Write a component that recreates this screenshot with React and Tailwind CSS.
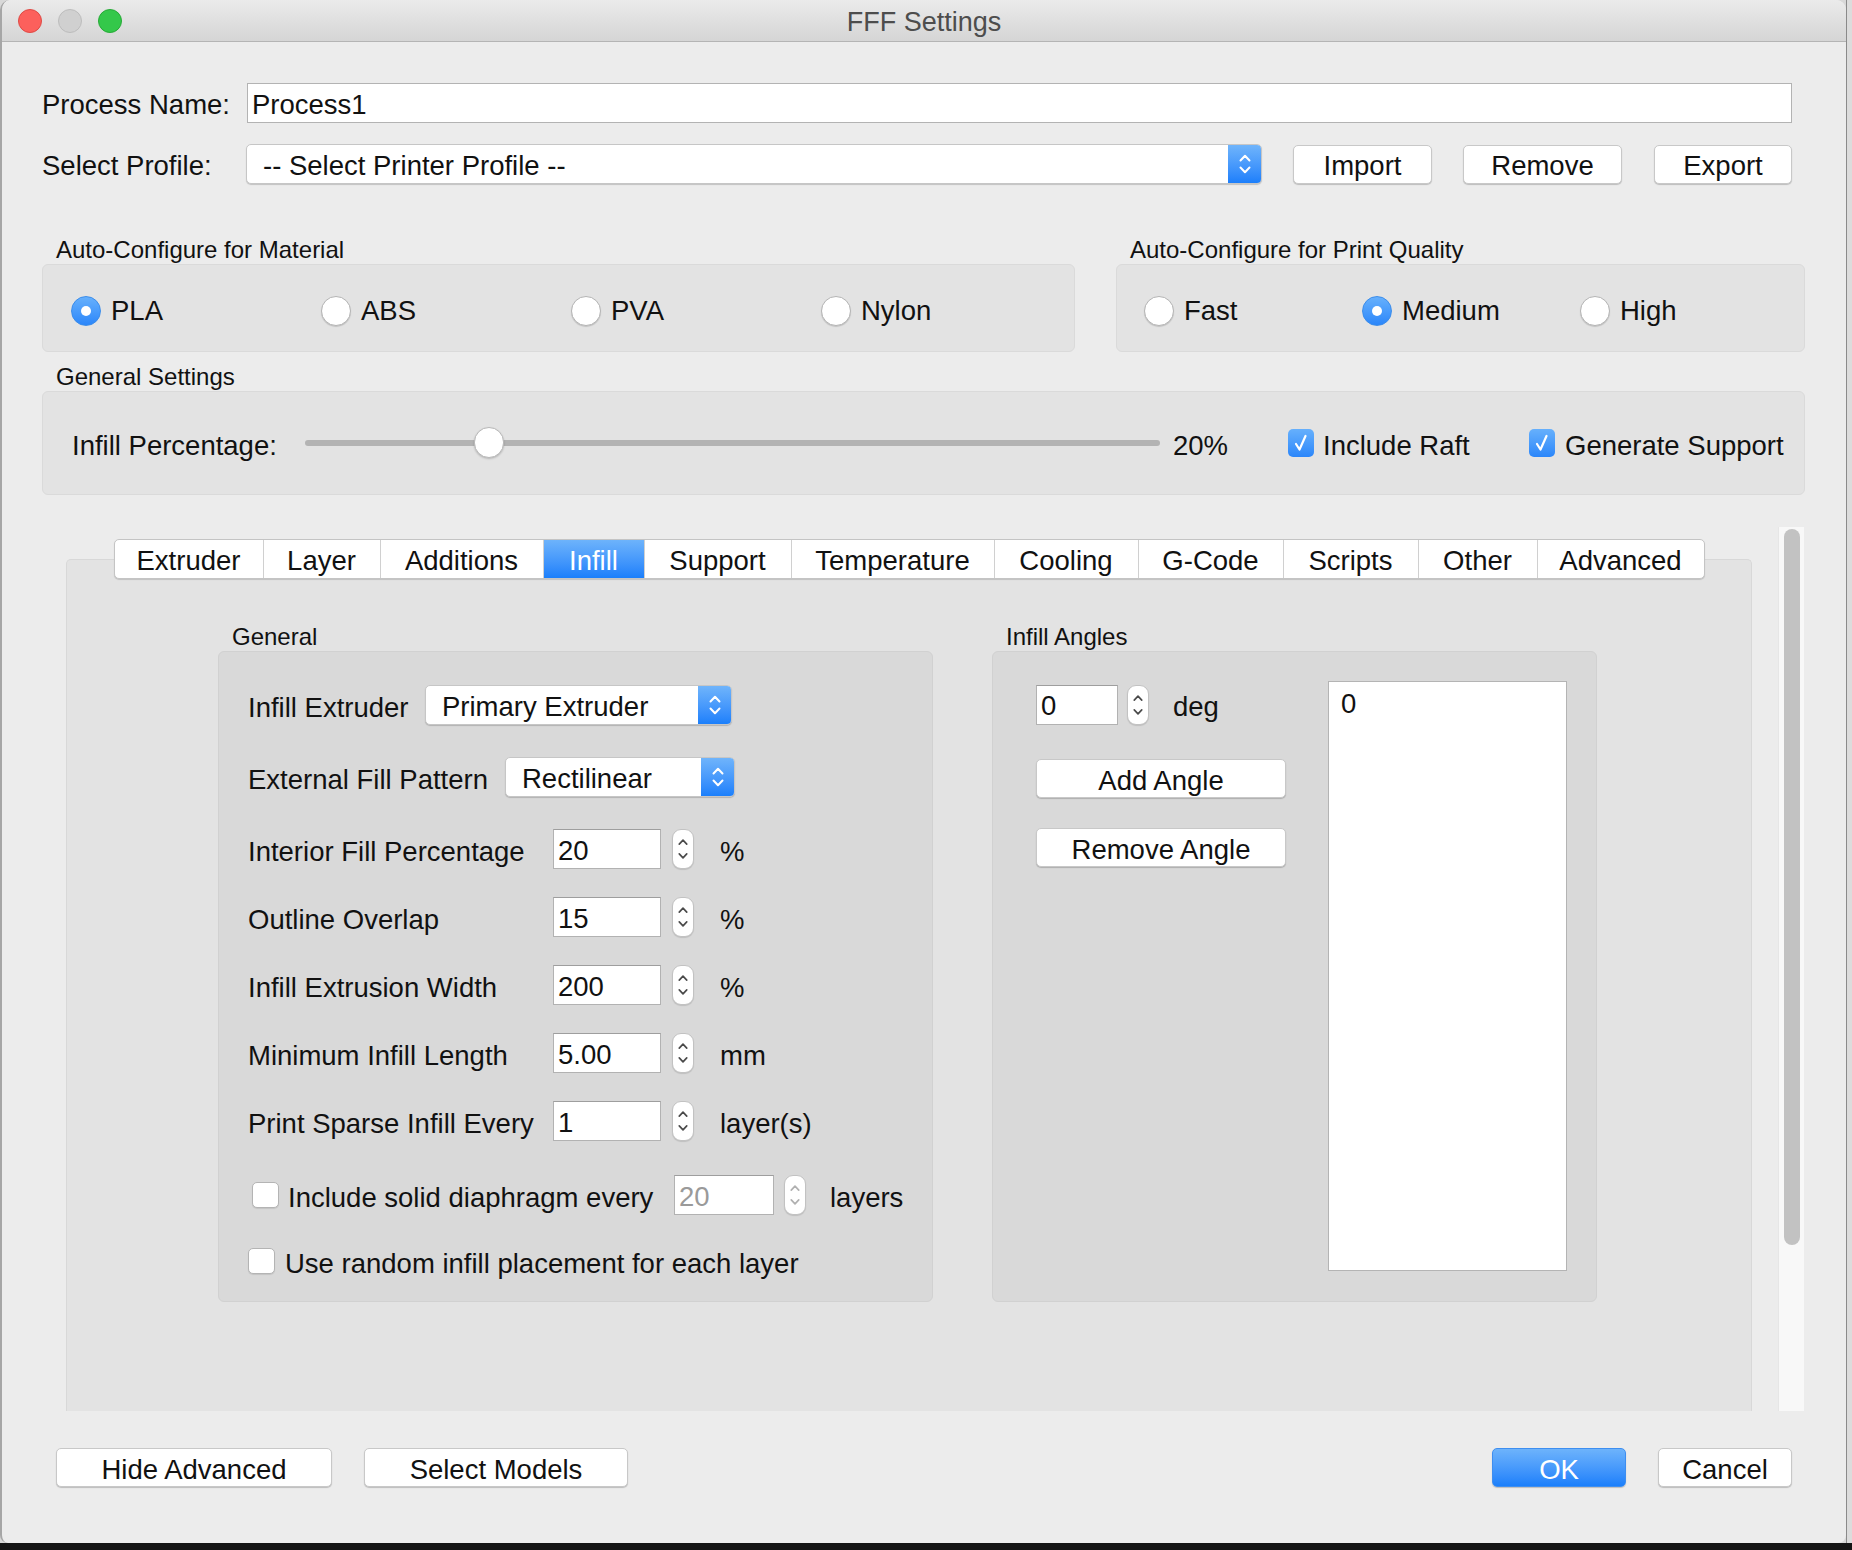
import React from "react";

// small up/down arrows used by the pop-up buttons and the steppers
const UpDown = ({ color = "#fff", gap = "gap-[5px]", w = 12 }) => (
  <div className={`flex flex-col items-center ${gap}`}>
    <svg width={w} height="8" viewBox="0 0 12 8" fill="none">
      <path d="M1.5 6.5 L6 1.8 L10.5 6.5" stroke={color} strokeWidth="2" strokeLinecap="round" strokeLinejoin="round" />
    </svg>
    <svg width={w} height="8" viewBox="0 0 12 8" fill="none">
      <path d="M1.5 1.5 L6 6.2 L10.5 1.5" stroke={color} strokeWidth="2" strokeLinecap="round" strokeLinejoin="round" />
    </svg>
  </div>
);

const Select = ({ w, text, pl = "pl-[16px]" }) => (
  <div className={`${w} h-[40px] flex bg-white rounded-[5px] border border-[#c6c6c6] shadow-[0_1px_1px_rgba(0,0,0,0.18)] overflow-hidden`}>
    <div className={`flex-1 flex items-center ${pl} pt-[4px] whitespace-nowrap`}>{text}</div>
    <div className="w-[33px] flex items-center justify-center bg-linear-to-b from-[#6fb4fb] to-[#1b7ffb]">
      <UpDown color="#fff" gap="gap-[4px]" w={14} />
    </div>
  </div>
);

const Stepper = ({ disabled }) => (
  <div className="w-[22px] h-[40px] rounded-[9px] bg-white border border-[#c2c2c2] shadow-[0_1px_1px_rgba(0,0,0,0.12)] flex items-center justify-center">
    <UpDown color={disabled ? "#b0b0b0" : "#4a4a4a"} gap="gap-[6px]" w={10} />
  </div>
);

const Input = ({ w, value, disabled }) => (
  <div className={`${w} h-[40px] bg-white border border-[#b2b2b2] border-t-[#9e9e9e] flex items-center pl-[4px] pt-[3px] ${disabled ? "text-[#9a9a9a]" : ""}`}>
    {value}
  </div>
);

const Button = ({ w, children, primary }) => (
  <div
    className={`${w} h-[39px] flex items-center justify-center pt-[4px] rounded-[5px] shadow-[0_1px_1px_rgba(0,0,0,0.2)] ${
      primary
        ? "bg-linear-to-b from-[#6db3fb] to-[#1a7ffb] border border-[#3e8ef0] text-white"
        : "bg-white border border-[#c8c8c8]"
    }`}
  >
    {children}
  </div>
);

const Radio = ({ on }) =>
  on ? (
    <div className="w-[30px] h-[30px] rounded-full bg-linear-to-b from-[#66b0fc] to-[#2a86fa] border border-[#3b8deb] flex items-center justify-center">
      <div className="w-[10px] h-[10px] rounded-full bg-white" />
    </div>
  ) : (
    <div className="w-[30px] h-[30px] rounded-full bg-white border border-[#b4b4b4] shadow-[0_1px_1px_rgba(0,0,0,0.15)]" />
  );

const Check = ({ on }) =>
  on ? (
    <div className="w-[26px] h-[28px] rounded-[5px] bg-linear-to-b from-[#66b0fc] to-[#2a86fa] flex items-center justify-center">
      <svg width="16" height="20" viewBox="0 0 16 20" fill="none">
        <path d="M3 11 L6.5 16.5 L12.5 3" stroke="#fff" strokeWidth="2.2" strokeLinecap="round" strokeLinejoin="round" />
      </svg>
    </div>
  ) : (
    <div className="w-[27px] h-[26px] rounded-[5px] bg-white border border-[#b4b4b4] shadow-[0_1px_1px_rgba(0,0,0,0.1)]" />
  );

const tabs = [
  ["Extruder", "w-[148px]"],
  ["Layer", "w-[117px]"],
  ["Additions", "w-[163px]"],
  ["Infill", "w-[101px]"],
  ["Support", "w-[147px]"],
  ["Temperature", "w-[203px]"],
  ["Cooling", "w-[144px]"],
  ["G-Code", "w-[145px]"],
  ["Scripts", "w-[135px]"],
  ["Other", "w-[119px]"],
  ["Advanced", "w-[167px]"],
];

const numberRows = [
  ["Interior Fill Percentage", "20", "%"],
  ["Outline Overlap", "15", "%"],
  ["Infill Extrusion Width", "200", "%"],
  ["Minimum Infill Length", "5.00", "mm"],
  ["Print Sparse Infill Every", "1", "layer(s)"],
];

const App = () => {
  return (
    <div className="w-[1852px] h-[1550px] flex flex-col bg-[#d8d8d8] font-['Liberation_Sans',Arial,sans-serif] text-[27.5px] text-[#111] leading-none">
      <div className="flex h-[1543px]">
        {/* window */}
        <div className="w-[1846px] h-full flex flex-col bg-[#ececec] rounded-t-[10px] rounded-b-[8px] border-l-[2px] border-[#a6a6a6] overflow-hidden">
          {/* title bar */}
          <div className="h-[42px] flex items-center bg-linear-to-b from-[#ebebeb] to-[#d5d5d5] border-b border-[#b4b4b4]">
            <div className="w-[140px] flex items-center gap-[16px] pl-[16px]">
              <div className="w-[24px] h-[24px] rounded-full bg-[#fc605c] border border-[#de4a45]" />
              <div className="w-[24px] h-[24px] rounded-full bg-[#d0d0d0] border border-[#bcbcbc]" />
              <div className="w-[24px] h-[24px] rounded-full bg-[#34c84a] border border-[#27aa37]" />
            </div>
            <div className="flex-1 text-center text-[27px] text-[#4d4d4d] pt-[3px]">FFF Settings</div>
            <div className="w-[140px]" />
          </div>

          <div className="flex flex-col pl-[40px] pr-[41px]">
            {/* process name */}
            <div className="mt-[41px] flex items-center h-[40px] mr-[13px]">
              <div className="w-[205px] pt-[3px]">Process Name:</div>
              <div className="flex-1 h-[40px] bg-white border border-[#b3b3b3] flex items-center pl-[4px] pt-[3px]">Process1</div>
            </div>

            {/* profile */}
            <div className="mt-[21px] flex items-center h-[40px] mr-[13px]">
              <div className="w-[204px] pt-[4px]">Select Profile:</div>
              <Select w="flex-1" text="-- Select Printer Profile --" />
              <div className="ml-[31px]">
                <Button w="w-[139px]">Import</Button>
              </div>
              <div className="ml-[31px]">
                <Button w="w-[159px]">Remove</Button>
              </div>
              <div className="ml-[32px]">
                <Button w="w-[138px]">Export</Button>
              </div>
            </div>

            {/* auto configure */}
            <div className="mt-[51px] flex gap-[41px]">
              <div className="w-[1033px] flex flex-col">
                <div className="h-[29px] pl-[14px] text-[24px] leading-[29px]">Auto-Configure for Material</div>
                <div className="h-[88px] flex items-center pl-[28px] pt-[6px] bg-[#e3e3e3] border border-[#dadada] rounded-[6px]">
                  {[["PLA", true], ["ABS"], ["PVA"], ["Nylon"]].map(([t, on]) => (
                    <div key={t} className="w-[250px] flex items-center gap-[10px]">
                      <Radio on={on} />
                      <span>{t}</span>
                    </div>
                  ))}
                </div>
              </div>
              <div className="w-[689px] flex flex-col">
                <div className="h-[29px] pl-[14px] text-[24px] leading-[29px]">Auto-Configure for Print Quality</div>
                <div className="h-[88px] flex items-center pl-[27px] pt-[6px] bg-[#e3e3e3] border border-[#dadada] rounded-[6px]">
                  {[["Fast"], ["Medium", true], ["High"]].map(([t, on]) => (
                    <div key={t} className="w-[218px] flex items-center gap-[10px]">
                      <Radio on={on} />
                      <span>{t}</span>
                    </div>
                  ))}
                </div>
              </div>
            </div>

            {/* general settings */}
            <div className="mt-[10px] h-[29px] pl-[14px] text-[24px] leading-[29px]">General Settings</div>
            <div className="h-[104px] flex items-center pl-[29px] bg-[#e3e3e3] border border-[#dadada] rounded-[6px]">
              <div className="w-[233px] pt-[5px]">Infill Percentage:</div>
              <div className="relative w-[855px] h-[32px] flex items-center">
                <div className="w-full h-[6px] rounded-full bg-[#b3b3b3]" />
                <div className="absolute left-[169px] top-[0px] w-[30px] h-[31px] rounded-full bg-white border border-[#b8b8b8] shadow-[0_1px_2px_rgba(0,0,0,0.2)]" />
              </div>
              <div className="ml-[13px] w-[115px] pt-[5px]">20%</div>
              <div className="w-[241px] flex items-center gap-[9px]">
                <Check on />
                <span className="pt-[5px]">Include Raft</span>
              </div>
              <div className="flex items-center gap-[10px]">
                <Check on />
                <span className="pt-[5px]">Generate Support</span>
              </div>
            </div>

            {/* tab area with scroll bar */}
            <div className="mt-[32px] h-[884px] flex pl-[24px]">
              <div className="w-[1686px] mt-[32px] h-[852px] bg-[#e3e3e3] rounded-t-[5px] border-t border-x border-[#d8d8d8] flex flex-col">
                <div className="-mt-[21px] flex justify-center">
                  <div className="h-[40px] flex bg-white border border-[#c4c4c4] rounded-[5px] overflow-hidden shadow-[0_1px_1px_rgba(0,0,0,0.15)]">
                    {tabs.map(([t, w], i) => (
                      <div
                        key={t}
                        className={`${w} flex items-center justify-center pt-[3px] ${i > 0 ? "border-l border-[#d0d0d0]" : ""} ${
                          t === "Infill" ? "bg-linear-to-b from-[#6db3fb] to-[#1a7ffb] text-white" : ""
                        }`}
                      >
                        {t}
                      </div>
                    ))}
                  </div>
                </div>

                <div className="mt-[43px] flex pl-[151px] gap-[59px]">
                  {/* General */}
                  <div className="w-[715px] flex flex-col">
                    <div className="h-[29px] pl-[14px] text-[24px] leading-[29px]">General</div>
                    <div className="h-[651px] bg-[#d9d9d9] border border-[#d1d1d1] rounded-[6px] pl-[29px] pt-[33px] flex flex-col">
                      <div className="h-[40px] flex items-center">
                        <div className="w-[177px] pt-[5px]">Infill Extruder</div>
                        <Select w="w-[307px]" text="Primary Extruder" pl="pl-[16px]" />
                      </div>
                      <div className="mt-[32px] h-[40px] flex items-center">
                        <div className="w-[257px] pt-[5px]">External Fill Pattern</div>
                        <Select w="w-[230px]" text="Rectilinear" pl="pl-[16px]" />
                      </div>
                      {numberRows.map(([label, val, unit], i) => (
                        <div key={label} className={`${i === 0 ? "mt-[32px]" : "mt-[28px]"} h-[40px] flex items-center`}>
                          <div className="w-[305px] whitespace-nowrap pt-[5px]">{label}</div>
                          <Input w="w-[108px]" value={val} />
                          <div className="ml-[11px]">
                            <Stepper />
                          </div>
                          <div className="ml-[26px] pt-[5px]">{unit}</div>
                        </div>
                      ))}
                      <div className="mt-[34px] h-[40px] flex items-center">
                        <div className="ml-[4px]">
                          <Check />
                        </div>
                        <div className="ml-[9px] w-[386px] whitespace-nowrap pt-[5px]">Include solid diaphragm every</div>
                        <Input w="w-[100px]" value="20" disabled />
                        <div className="ml-[10px]">
                          <Stepper disabled />
                        </div>
                        <div className="ml-[24px] pt-[5px]">layers</div>
                      </div>
                      <div className="mt-[26px] h-[40px] flex items-center">
                        <Check />
                        <div className="ml-[10px] whitespace-nowrap pt-[5px]">Use random infill placement for each layer</div>
                      </div>
                    </div>
                  </div>

                  {/* Infill Angles */}
                  <div className="w-[605px] flex flex-col">
                    <div className="h-[29px] pl-[14px] text-[24px] leading-[29px]">Infill Angles</div>
                    <div className="h-[651px] bg-[#d9d9d9] border border-[#d1d1d1] rounded-[6px] pl-[43px] pt-[29px] flex">
                      <div className="w-[292px] mt-[3px] flex flex-col">
                        <div className="h-[41px] flex items-center">
                          <Input w="w-[82px]" value="0" />
                          <div className="ml-[9px]">
                            <Stepper />
                          </div>
                          <div className="ml-[24px] pt-[5px]">deg</div>
                        </div>
                        <div className="mt-[34px]">
                          <Button w="w-[250px]">Add Angle</Button>
                        </div>
                        <div className="mt-[30px]">
                          <Button w="w-[250px]">Remove Angle</Button>
                        </div>
                      </div>
                      <div className="w-[239px] h-[590px] bg-white border border-[#b4b4b4] pl-[12px] pt-[8px]">0</div>
                    </div>
                  </div>
                </div>
              </div>

              {/* scroll bar */}
              <div className="ml-[26px] w-[26px] h-full bg-[#f8f8f8] border-l border-[#e6e6e6] pt-[2px] flex justify-center">
                <div className="w-[16px] h-[716px] rounded-full bg-[#c2c2c2]" />
              </div>
            </div>

            {/* bottom buttons */}
            <div className="mt-[37px] flex items-center mr-[13px]">
              <div className="ml-[14px]">
                <Button w="w-[276px]">Hide Advanced</Button>
              </div>
              <div className="ml-[32px]">
                <Button w="w-[264px]">Select Models</Button>
              </div>
              <div className="flex-1" />
              <Button w="w-[134px]" primary>
                OK
              </Button>
              <div className="ml-[32px]">
                <Button w="w-[134px]">Cancel</Button>
              </div>
            </div>
          </div>
        </div>
        <div className="flex-1 bg-[#dcdcdc] border-l border-[#8a8a8a]" />
      </div>
      <div className="h-[7px] bg-[#141414]" />
    </div>
  );
};

export default App;
